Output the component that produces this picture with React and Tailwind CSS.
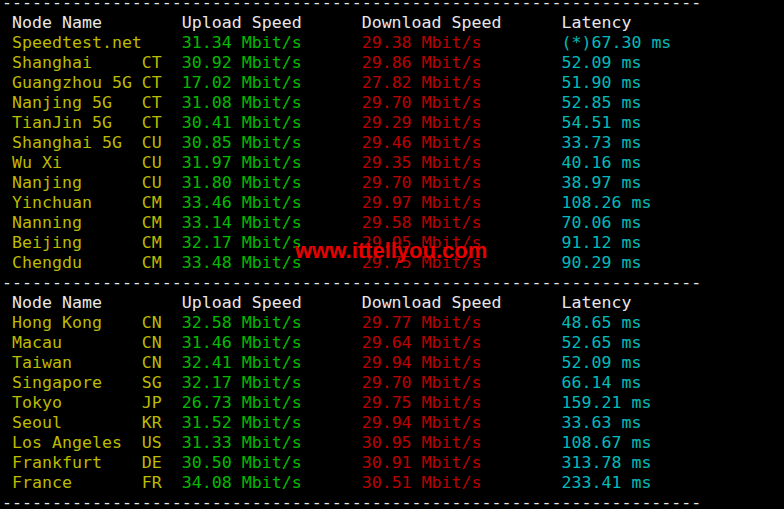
const C = {
  head: "text-[#e8e8e8]",
  name: "text-[#bbbb00]",
  up: "text-[#00bb00]",
  down: "text-[#bb0000]",
  lat: "text-[#00bbbb]",
};

const DASHES = "-".repeat(70);

const group1 = [
  ["Speedtest.net", "", "31.34", "29.38", "(*)67.30"],
  ["Shanghai", "CT", "30.92", "29.86", "52.09"],
  ["Guangzhou 5G", "CT", "17.02", "27.82", "51.90"],
  ["Nanjing 5G", "CT", "31.08", "29.70", "52.85"],
  ["TianJin 5G", "CT", "30.41", "29.29", "54.51"],
  ["Shanghai 5G", "CU", "30.85", "29.46", "33.73"],
  ["Wu Xi", "CU", "31.97", "29.35", "40.16"],
  ["Nanjing", "CU", "31.80", "29.70", "38.97"],
  ["Yinchuan", "CM", "33.46", "29.97", "108.26"],
  ["Nanning", "CM", "33.14", "29.58", "70.06"],
  ["Beijing", "CM", "32.17", "29.95", "91.12"],
  ["Chengdu", "CM", "33.48", "29.75", "90.29"],
];

const group2 = [
  ["Hong Kong", "CN", "32.58", "29.77", "48.65"],
  ["Macau", "CN", "31.46", "29.64", "52.65"],
  ["Taiwan", "CN", "32.41", "29.94", "52.09"],
  ["Singapore", "SG", "32.17", "29.70", "66.14"],
  ["Tokyo", "JP", "26.73", "29.75", "159.21"],
  ["Seoul", "KR", "31.52", "29.94", "33.63"],
  ["Los Angeles", "US", "31.33", "30.95", "108.67"],
  ["Frankfurt", "DE", "30.50", "30.91", "313.78"],
  ["France", "FR", "34.08", "30.51", "233.41"],
];

function Dashes() {
  return <div className="h-5 text-[#e8e8e8]">{DASHES}</div>;
}

function Header() {
  return (
    <div className={`h-5 ${C.head}`}>
      {" " + "Node Name".padEnd(17) + "Upload Speed".padEnd(18) + "Download Speed".padEnd(20) + "Latency"}
    </div>
  );
}

function Row({ r }) {
  const [name, cc, up, down, lat] = r;
  const nameCol = cc ? name.padEnd(13) + cc : name;
  return (
    <div className="h-5">
      <span className={C.name}>{" " + nameCol.padEnd(17)}</span>
      <span className={C.up}>{(up + " Mbit/s").padEnd(18)}</span>
      <span className={C.down}>{(down + " Mbit/s").padEnd(20)}</span>
      <span className={C.lat}>{lat + " ms"}</span>
    </div>
  );
}

export default function App() {
  return (
    <div className="relative h-[509px] w-[784px] overflow-hidden bg-black">
      <div
        className="ml-[2px] mt-[-7px] whitespace-pre text-[16.6px] leading-5"
        style={{ fontFamily: '"DejaVu Sans Mono", "Liberation Mono", monospace' }}
      >
        <Dashes />
        <Header />
        {group1.map((r) => (
          <Row key={r[0] + r[1]} r={r} />
        ))}
        <Dashes />
        <Header />
        {group2.map((r) => (
          <Row key={r[0] + r[1]} r={r} />
        ))}
        <Dashes />
      </div>
      {/* watermark */}
      <div
        className="absolute left-[295px] top-[239px] text-[22px] font-bold leading-6 text-[#e80000]"
        style={{ fontFamily: '"Liberation Sans", Arial, sans-serif' }}
      >
        www.ittellyou.com
      </div>
    </div>
  );
}
